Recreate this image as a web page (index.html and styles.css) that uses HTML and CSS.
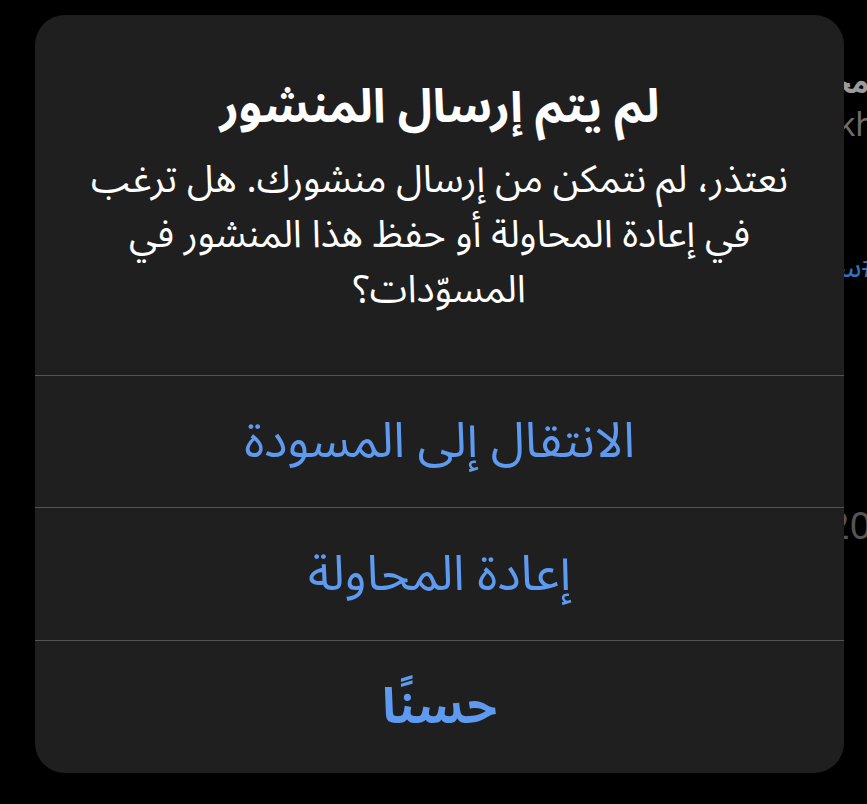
FILE: index.html
```html
<!DOCTYPE html>
<html lang="ar" dir="rtl">
<head>
  <meta charset="UTF-8">
  <meta name="viewport" content="width=device-width, initial-scale=1.0">
  <title>لم يتم إرسال المنشور</title>
  <link rel="stylesheet" href="styles.css">
</head>
<body>
  <div class="screen">
    <div class="feed">
      <div class="feed-name">محمد</div>
      <div class="feed-handle" dir="ltr">@abkh</div>
      <div class="feed-link">#سعودية</div>
      <div class="feed-date" dir="ltr">2023</div>
    </div>

    <div class="alert" role="alertdialog">
      <div class="alert-header">
        <h1 class="alert-title">لم يتم إرسال المنشور</h1>
        <p class="alert-message">نعتذر، لم نتمكن من إرسال منشورك. هل ترغب في إعادة المحاولة أو حفظ هذا المنشور في المسوّدات؟</p>
      </div>
      <button class="alert-button">الانتقال إلى المسودة</button>
      <button class="alert-button">إعادة المحاولة</button>
      <button class="alert-button alert-button-bold">حسنًا</button>
    </div>
  </div>
</body>
</html>
```

FILE: styles.css
```css
:root {
  --page-bg: #000000;
  --alert-bg: #1f1f1f;
  --separator: #545454;
  --text-color: #ffffff;
  --action-color: #5e9af0;
  --feed-name: #9b9b9b;
  --feed-muted: #6d6d6d;
  --feed-link: #2f74bf;
}

body {
  margin: 0;
  background: var(--page-bg);
  font-family: "Noto Sans Arabic", "DejaVu Sans", "Noto Sans", sans-serif;
}

.screen {
  position: relative;
  width: 867px;
  height: 804px;
  overflow: hidden;
}

.feed {
  display: flex;
  flex-direction: column;
  align-items: flex-start;
  padding-top: 62px;
}

.feed-name {
  font-size: 30px;
  font-weight: bold;
  color: var(--feed-name);
  line-height: 44px;
  margin-right: -2px;
}

.feed-handle {
  font-size: 32px;
  color: var(--feed-muted);
  line-height: 40px;
  margin-right: -8px;
}

.feed-link {
  font-size: 30px;
  color: var(--feed-link);
  margin-top: 90px;
  margin-right: -14px;
}

.feed-date {
  font-size: 38px;
  color: #555555;
  margin-top: 188px;
  margin-right: -48px;
}

.alert {
  position: absolute;
  top: 15px;
  left: 35px;
  width: 809px;
  height: 758px;
  background: var(--alert-bg);
  border-radius: 30px;
  display: flex;
  flex-direction: column;
  overflow: hidden;
}

.alert-header {
  height: 360px;
  padding: 0 44px;
  text-align: center;
  color: var(--text-color);
}

.alert-title {
  margin: 62px 0 0;
  font-size: 47px;
  line-height: 60px;
  font-weight: bold;
}

.alert-message {
  margin: 16px 0 0;
  font-size: 38px;
  line-height: 55px;
}

.alert-button {
  display: block;
  height: 133px;
  border: 0;
  border-top: 1px solid var(--separator);
  background: transparent;
  color: var(--action-color);
  font-family: inherit;
  font-size: 49px;
  padding: 0;
}

.alert-button-bold {
  font-weight: bold;
}
```
